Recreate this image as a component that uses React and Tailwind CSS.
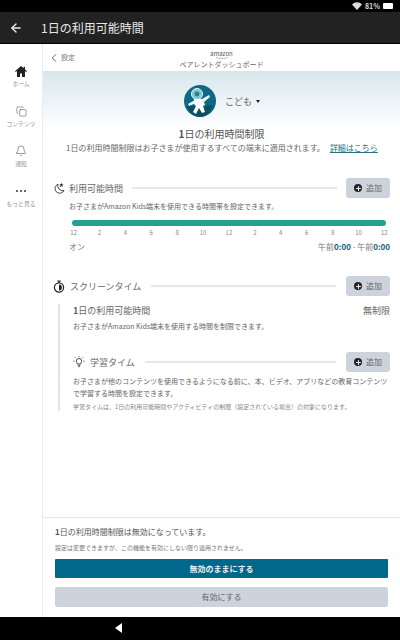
import { ArrowLeft, ChevronLeft, Copy, Bell, Plus } from 'lucide-react';

const hours = ['12', '2', '4', '6', '8', '10', '12', '2', '4', '6', '8', '10', '12'];

function SideItem({ icon, label }) {
  return (
    <div className="flex h-[40px] flex-col items-center">
      <div className="flex h-[14px] items-center justify-center text-[#444]">{icon}</div>
      <div className="mt-[2px] whitespace-nowrap text-[5.8px] leading-[8px] text-[#8f9499]">{label}</div>
    </div>
  );
}

function AddButton() {
  return (
    <div className="flex h-[20px] w-[44px] shrink-0 items-center justify-center gap-[4px] rounded-[3px] bg-[#ccd3dc]">
      <div className="flex h-[8px] w-[8px] items-center justify-center rounded-full bg-[#222]">
        <Plus size={7} strokeWidth={3.5} color="#e8ebef" />
      </div>
      <span className="text-[8px] leading-none text-[#666]">追加</span>
    </div>
  );
}

function SectionHead({ icon, title, iconGap }) {
  return (
    <div className={`flex items-center ${iconGap}`}>
      {icon}
      <span className="whitespace-nowrap text-[9px] leading-none text-[#666]">{title}</span>
      <div className="mx-[5px] h-[2px] flex-1 bg-[#e8e8e8]" />
      <AddButton />
    </div>
  );
}

function MoonIcon() {
  return (
    <svg width="12" height="13" viewBox="0 0 12 13" fill="none" className="shrink-0">
      <path d="M5 2.2a4.7 4.7 0 1 0 6 6.4 5 5 0 0 1-6-6.4z" stroke="#333" strokeWidth="0.9" />
      <path d="M8.4.8l.6 1.4 1.5.2-1.1 1 .3 1.5-1.3-.7-1.3.7.3-1.5-1.1-1 1.5-.2z" fill="#333" />
    </svg>
  );
}

function TimerIcon() {
  return (
    <svg width="12" height="13" viewBox="0 0 12 13" fill="none" className="shrink-0">
      <circle cx="6" cy="7.5" r="4.6" stroke="#222" strokeWidth="1.2" />
      <path d="M4.2 1h3.6M6 1v2" stroke="#222" strokeWidth="1.2" />
      <path d="M6 7.5V4.6A2.9 2.9 0 0 1 6 10.4z" fill="#222" />
    </svg>
  );
}

function BulbIcon() {
  return (
    <svg width="12" height="12" viewBox="0 0 14 14" fill="none" stroke="#333" strokeWidth="1" className="shrink-0">
      <path d="M5 9.3c0-1.4-1.1-1.7-1.1-3.3a3.1 3.1 0 0 1 6.2 0c0 1.6-1.1 1.9-1.1 3.3z" />
      <path d="M5.4 10.8h3.2M6 12.4h2" />
      <path d="M7 .2v1.2M2.4 1.6l.9.9M11.6 1.6l-.9.9M.6 6h1.3M12.1 6h1.3" />
    </svg>
  );
}

function HomeIcon() {
  return (
    <svg width="12" height="11" viewBox="0 0 12 11">
      <path d="M6 0L0 5.2l.7.8L2 4.9V11h3V7.5h2V11h3V4.9L11.3 6l.7-.8L10 3.5V.8H8.6v1.5z" fill="#222" />
    </svg>
  );
}

function Mascot() {
  return (
    <svg width="32" height="32" viewBox="0 0 32 32" className="shrink-0">
      <circle cx="16" cy="16" r="16" fill="#0d6a86" />
      <path d="M3 21c5-3 9 3 13 2s9-4 13-2c-3 7-8 11-13 11S5 28 3 21z" fill="#0a4f66" />
      <circle cx="13" cy="9" r="5.5" fill="#7fc4cf" stroke="#e8f4f6" strokeWidth="1" />
      <circle cx="13" cy="9" r="2.4" fill="#2d7c8f" />
      <path d="M10 14h9l2 6-2 1 2 6-3 1-3-5-3 6-3-2 3-6-2-2z" fill="#fff" />
      <path d="M11 15l-7 4 1 2 7-3zM18 14l7-4 1 2-6 5z" fill="#f2f7f8" />
    </svg>
  );
}

export default function App() {
  return (
    <div className="flex h-[640px] w-[400px] flex-col overflow-hidden bg-white font-['Noto_Sans_CJK_JP','Noto_Sans',sans-serif]">
      <div className="flex h-[12px] shrink-0 items-center justify-end gap-[3px] bg-black pr-[7px] text-[7px] font-bold text-[#ddd]">
        <svg width="10" height="8" viewBox="0 0 10 8"><path d="M0 2.4a7 7 0 0 1 10 0L5 8z" fill="#ddd" /></svg>
        <span className="leading-none">81%</span>
        <div className="h-[6px] w-[10px] rounded-[1px] bg-white" />
      </div>

      <div className="flex h-[32px] shrink-0 items-center border-b border-black bg-[#222222] text-[#e8e8e8]">
        <ArrowLeft size={14} strokeWidth={2.4} className="ml-[9px]" />
        <span className="ml-[18px] text-[12px] leading-none">1日の利用可能時間</span>
      </div>

      <div className="flex min-h-0 flex-1">
        <div className="flex w-[43px] shrink-0 flex-col items-center border-r border-[#e4eef0] pt-[20px]">
          <SideItem icon={<HomeIcon />} label="ホーム" />
          <SideItem icon={<Copy size={11} strokeWidth={1.1} />} label="コンテンツ" />
          <SideItem icon={<Bell size={12} strokeWidth={1.1} />} label="通知" />
          <SideItem
            icon={
              <div className="flex gap-[2px]">
                <div className="h-[2px] w-[2px] rounded-full bg-[#333]" />
                <div className="h-[2px] w-[2px] rounded-full bg-[#333]" />
                <div className="h-[2px] w-[2px] rounded-full bg-[#333]" />
              </div>
            }
            label="もっと見る"
          />
        </div>

        <div className="flex min-w-0 flex-1 flex-col">
          <div className="flex h-[28px] shrink-0 items-center border-b border-[#dfe3e6] pl-[4px]">
            <ChevronLeft size={14} strokeWidth={1.3} color="#333" />
            <span className="text-[7px] leading-none text-[#777]">設定</span>
            <div className="flex-1 pr-[32px] pt-[3px] text-center">
              <div className="text-[6px] leading-[6px] text-[#555]">amazon</div>
              <svg width="12" height="2" viewBox="0 0 12 2" className="mx-auto block">
                <path d="M0 0c3 2 9 2 12 0" stroke="#777" strokeWidth="0.5" fill="none" />
              </svg>
              <div className="mt-[1px] text-[7px] leading-[8px] text-[#666]">ペアレントダッシュボード</div>
            </div>
          </div>

          <div className="flex h-[57px] shrink-0 items-center justify-center gap-[9px] bg-gradient-to-b from-[#d8e7ed] to-white pl-[1px] pt-[1px]">
            <Mascot />
            <div className="flex items-center gap-[4px]">
              <span className="text-[9px] leading-none text-[#666]">こども</span>
              <div className="mt-[1px] h-0 w-0 border-x-[2.5px] border-t-[3px] border-x-transparent border-t-[#222]" />
            </div>
          </div>

          <div className="mt-[-1px] text-center text-[10px] leading-[12px] text-[#555]">
            <span className="font-bold">1</span>日の利用時間制限
          </div>
          <div className="mt-[2px] flex justify-center gap-[5px] pl-[1px] text-[8px] leading-[11px] text-[#666]">
            <span>1日の利用時間制限はお子さまが使用するすべての端末に適用されます。</span>
            <span className="text-[#2b6f80] underline">詳細はこちら</span>
          </div>

          <div className="mt-[25px] px-[10px]">
            <SectionHead icon={<MoonIcon />} title="利用可能時間" iconGap="gap-[4px]" />
            <div className="ml-[16px] mt-[3px] text-[7px] leading-[10px] text-[#666]">お子さまがAmazon Kids端末を使用できる時間帯を設定できます。</div>
            <div className="ml-[19px] mr-[4px] mt-[9px] h-[6px] rounded-full bg-[#23a08e]" />
            <div className="ml-[17px] mr-[2px] mt-[3px] flex justify-between text-[6px] leading-[8px] text-[#888]">
              {hours.map((h, i) => (
                <span key={i} className="w-[7px] text-center">{h}</span>
              ))}
            </div>
            <div className="ml-[16px] mt-[4px] flex items-center justify-between text-[8px] leading-[12px] text-[#777]">
              <span>オン</span>
              <span>
                午前<b className="text-[#0f5f75]">0:00</b> - 午前<b className="text-[#0f5f75]">0:00</b>
              </span>
            </div>
          </div>

          <div className="mt-[23px] px-[10px]">
            <SectionHead icon={<TimerIcon />} title="スクリーンタイム" iconGap="gap-[5px]" />
            <div className="ml-[5px] mt-[8px] border-l-2 border-[#e4e4e4] pl-[13px]">
              <div className="flex items-center justify-between text-[9px] leading-[14px] text-[#666]">
                <span><span className="font-bold">1</span>日の利用可能時間</span>
                <span>無制限</span>
              </div>
              <div className="mt-[3px] text-[7px] leading-[10px] text-[#666]">お子さまがAmazon Kids端末を使用する時間を制限できます。</div>
              <div className="mt-[21px]">
                <SectionHead icon={<BulbIcon />} title="学習タイム" iconGap="gap-[5px]" />
              </div>
              <div className="mt-[3px] text-[7px] leading-[12px] text-[#666]">お子さまが他のコンテンツを使用できるようになる前に、本、ビデオ、アプリなどの教育コンテンツで学習する時間を設定できます。</div>
              <div className="mt-[3px] text-[6px] leading-[9px] text-[#888]">学習タイムは、1日の利用可能時間やアクティビティの制限（設定されている場合）の対象になります。</div>
            </div>
          </div>

          <div className="mt-auto h-[100px] shrink-0 border-t border-[#e2e6e8] px-[12px] pt-[8px]">
            <div className="text-[8px] leading-[12px] text-[#555]"><span className="font-bold">1</span>日の利用時間制限は無効になっています。</div>
            <div className="mt-[5px] text-[6px] leading-[9px] text-[#777]">設定は変更できますが、この機能を有効にしない限り適用されません。</div>
            <div className="mt-[7px] flex h-[19px] items-center justify-center rounded-[1px] bg-[#00688b] text-[8px] font-bold leading-none text-[#e8f0f3]">無効のままにする</div>
            <div className="mt-[9px] flex h-[20px] items-center justify-center rounded-[2px] bg-[#ccd3dc] text-[8px] leading-none text-[#666]">有効にする</div>
          </div>
        </div>
      </div>

      <div className="flex h-[23px] shrink-0 items-center bg-black pl-[115px]">
        <div className="mt-[-1px] h-0 w-0 border-y-[5px] border-r-[7px] border-y-transparent border-r-white" />
      </div>
    </div>
  );
}
